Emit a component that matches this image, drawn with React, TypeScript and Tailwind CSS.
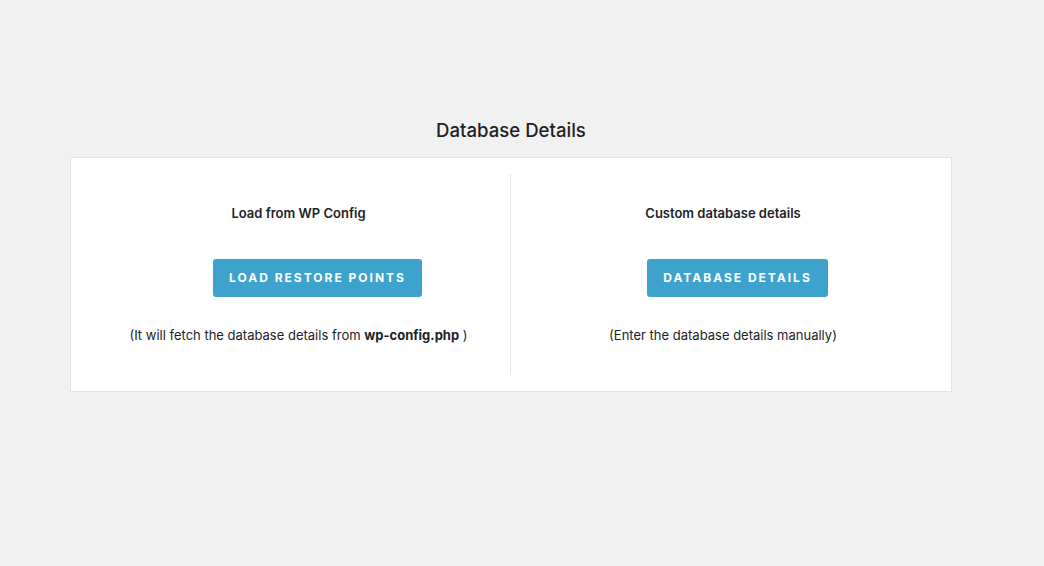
const font = { fontFamily: "Inter, 'Noto Sans', sans-serif" };

const App = () => {
  return (
    <div className="min-h-screen bg-[#f1f1f1] text-[#1d2327]" style={font}>
      <div className="ml-[70px] w-[882px] pt-[118px]">
        {/* Title */}
        <h1 className="text-center text-[18.6px] leading-[24px] font-medium mb-[15px]">
          Database Details
        </h1>

        {/* Card */}
        <div className="bg-white border border-[#e3e3e3] py-[16px] grid grid-cols-2">
          <div className="border-r border-[#e3e3e3] pl-[16px] flex flex-col items-center h-[201px]">
            <h3 className="mt-[29px] text-[13px] leading-[20px] font-semibold">
              Load from WP Config
            </h3>
            <button className="ml-[38px] mt-[36px] h-[38px] px-[16px] rounded-[3px] bg-[#3ea3cc] text-white text-[12px] font-bold tracking-[2px] uppercase">
              Load Restore Points
            </button>
            <p className="mt-[28px] text-[13px] leading-[20px]">
              (It will fetch the database details from <b>wp-config.php</b> )
            </p>
          </div>

          <div className="pr-[16px] flex flex-col items-center h-[201px]">
            <h3 className="mt-[29px] text-[13px] leading-[20px] font-semibold">
              Custom database details
            </h3>
            <button className="ml-[29px] mt-[36px] h-[38px] px-[16px] rounded-[3px] bg-[#3ea3cc] text-white text-[12px] font-bold tracking-[2px] uppercase">
              Database Details
            </button>
            <p className="mt-[28px] text-[13px] leading-[20px]">
              (Enter the database details manually)
            </p>
          </div>
        </div>
      </div>
    </div>
  );
};

export default App;
